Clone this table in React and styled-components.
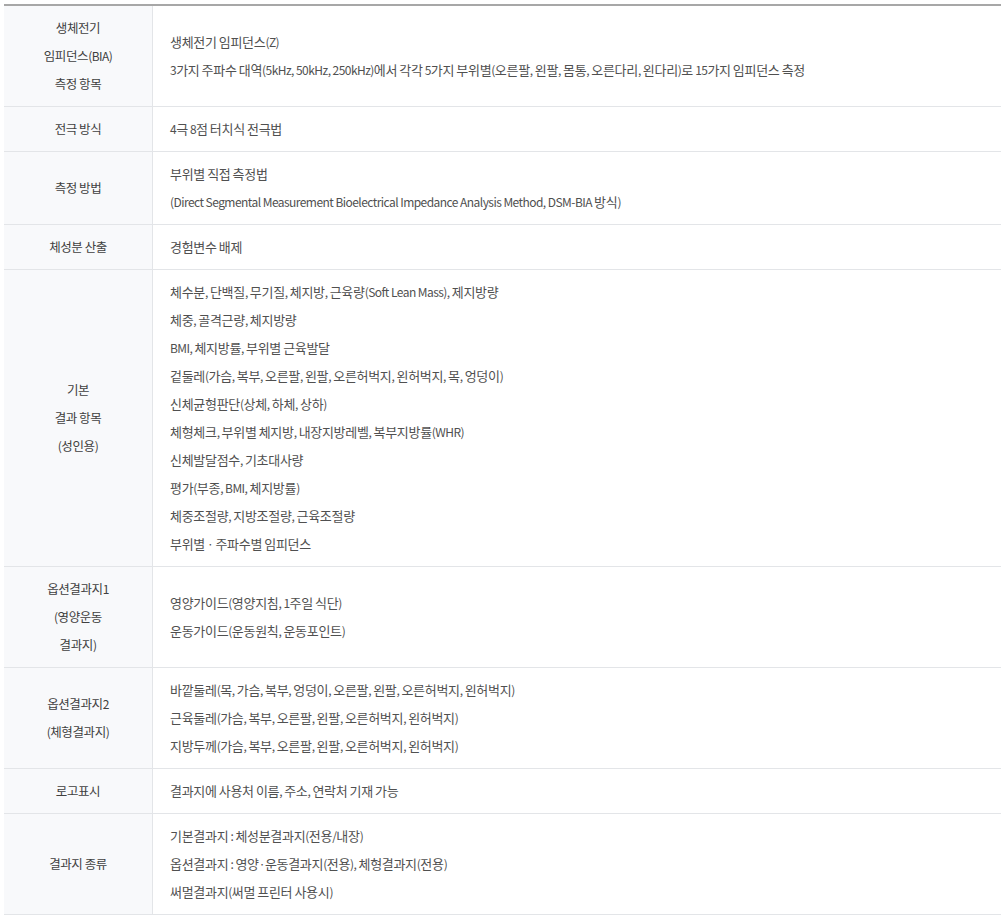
import React from 'react'
import styled, { createGlobalStyle } from 'styled-components'

const GlobalStyle = createGlobalStyle`
  html, body {
    margin: 0;
    padding: 0;
    background: #fff;
  }
  body {
    font-family: "Noto Sans CJK KR", "Noto Sans", sans-serif;
  }
`

const Page = styled.div`
  padding: 4px 5px 4px 4px;
`

const Table = styled.div`
  border-top: 2px solid #a7a7a7;
`

const Row = styled.div`
  display: grid;
  grid-template-columns: 149px 1fr;
  border-bottom: 1px solid #e3e5e8;
`

const Head = styled.div`
  background: #f8f9fb;
  border-right: 1px solid #e3e5e8;
  display: flex;
  flex-direction: column;
  justify-content: center;
  align-items: center;
  text-align: center;
  padding: 8px 0;
  font-size: 12.5px;
  line-height: 28px;
  color: #404040;
  letter-spacing: -0.4px;
`

const Body = styled.div`
  display: flex;
  flex-direction: column;
  justify-content: center;
  padding: 8px 17px;
  font-size: 13px;
  line-height: 28px;
  color: #505050;
  letter-spacing: -0.3px;
`

const Line = styled.div`
  white-space: nowrap;
`

// latin, digits and punctuation run narrower than hangul in the original font
const Latin = styled.span`
  font-size: 12px;
  letter-spacing: -0.55px;
`

const Text = ({ children }) =>
  children.split(/([\uAC00-\uD7A3]+)/).map((part, i) =>
    part === '' ? null : /[\uAC00-\uD7A3]/.test(part) ? (
      <React.Fragment key={i}>{part}</React.Fragment>
    ) : (
      <Latin key={i}>{part}</Latin>
    )
  )

const rows = [
  {
    head: ['생체전기', '임피던스(BIA)', '측정 항목'],
    body: [
      '생체전기 임피던스(Z)',
      '3가지 주파수 대역(5kHz, 50kHz, 250kHz)에서 각각 5가지 부위별(오른팔, 왼팔, 몸통, 오른다리, 왼다리)로 15가지 임피던스 측정',
    ],
  },
  { head: ['전극 방식'], body: ['4극 8점 터치식 전극법'] },
  {
    head: ['측정 방법'],
    body: [
      '부위별 직접 측정법',
      '(Direct Segmental Measurement Bioelectrical Impedance Analysis Method, DSM-BIA 방식)',
    ],
  },
  { head: ['체성분 산출'], body: ['경험변수 배제'] },
  {
    head: ['기본', '결과 항목', '(성인용)'],
    body: [
      '체수분, 단백질, 무기질, 체지방, 근육량(Soft Lean Mass), 제지방량',
      '체중, 골격근량, 체지방량',
      'BMI, 체지방률, 부위별 근육발달',
      '겉둘레(가슴, 복부, 오른팔, 왼팔, 오른허벅지, 왼허벅지, 목, 엉덩이)',
      '신체균형판단(상체, 하체, 상하)',
      '체형체크, 부위별 체지방, 내장지방레벨, 복부지방률(WHR)',
      '신체발달점수, 기초대사량',
      '평가(부종, BMI, 체지방률)',
      '체중조절량, 지방조절량, 근육조절량',
      '부위별 · 주파수별 임피던스',
    ],
  },
  {
    head: ['옵션결과지1', '(영양운동', '결과지)'],
    body: ['영양가이드(영양지침, 1주일 식단)', '운동가이드(운동원칙, 운동포인트)'],
  },
  {
    head: ['옵션결과지2', '(체형결과지)'],
    body: [
      '바깥둘레(목, 가슴, 복부, 엉덩이, 오른팔, 왼팔, 오른허벅지, 왼허벅지)',
      '근육둘레(가슴, 복부, 오른팔, 왼팔, 오른허벅지, 왼허벅지)',
      '지방두께(가슴, 복부, 오른팔, 왼팔, 오른허벅지, 왼허벅지)',
    ],
  },
  { head: ['로고표시'], body: ['결과지에 사용처 이름, 주소, 연락처 기재 가능'] },
  {
    head: ['결과지 종류'],
    body: [
      '기본결과지 : 체성분결과지(전용/내장)',
      '옵션결과지 : 영양·운동결과지(전용), 체형결과지(전용)',
      '써멀결과지(써멀 프린터 사용시)',
    ],
  },
]

export default function App() {
  return (
    <Page>
      <GlobalStyle />
      <Table>
        {rows.map((row, i) => (
          <Row key={i}>
            <Head>
              {row.head.map((t, j) => (
                <Line key={j}>
                  <Text>{t}</Text>
                </Line>
              ))}
            </Head>
            <Body>
              {row.body.map((t, j) => (
                <Line key={j}>
                  <Text>{t}</Text>
                </Line>
              ))}
            </Body>
          </Row>
        ))}
      </Table>
    </Page>
  )
}
